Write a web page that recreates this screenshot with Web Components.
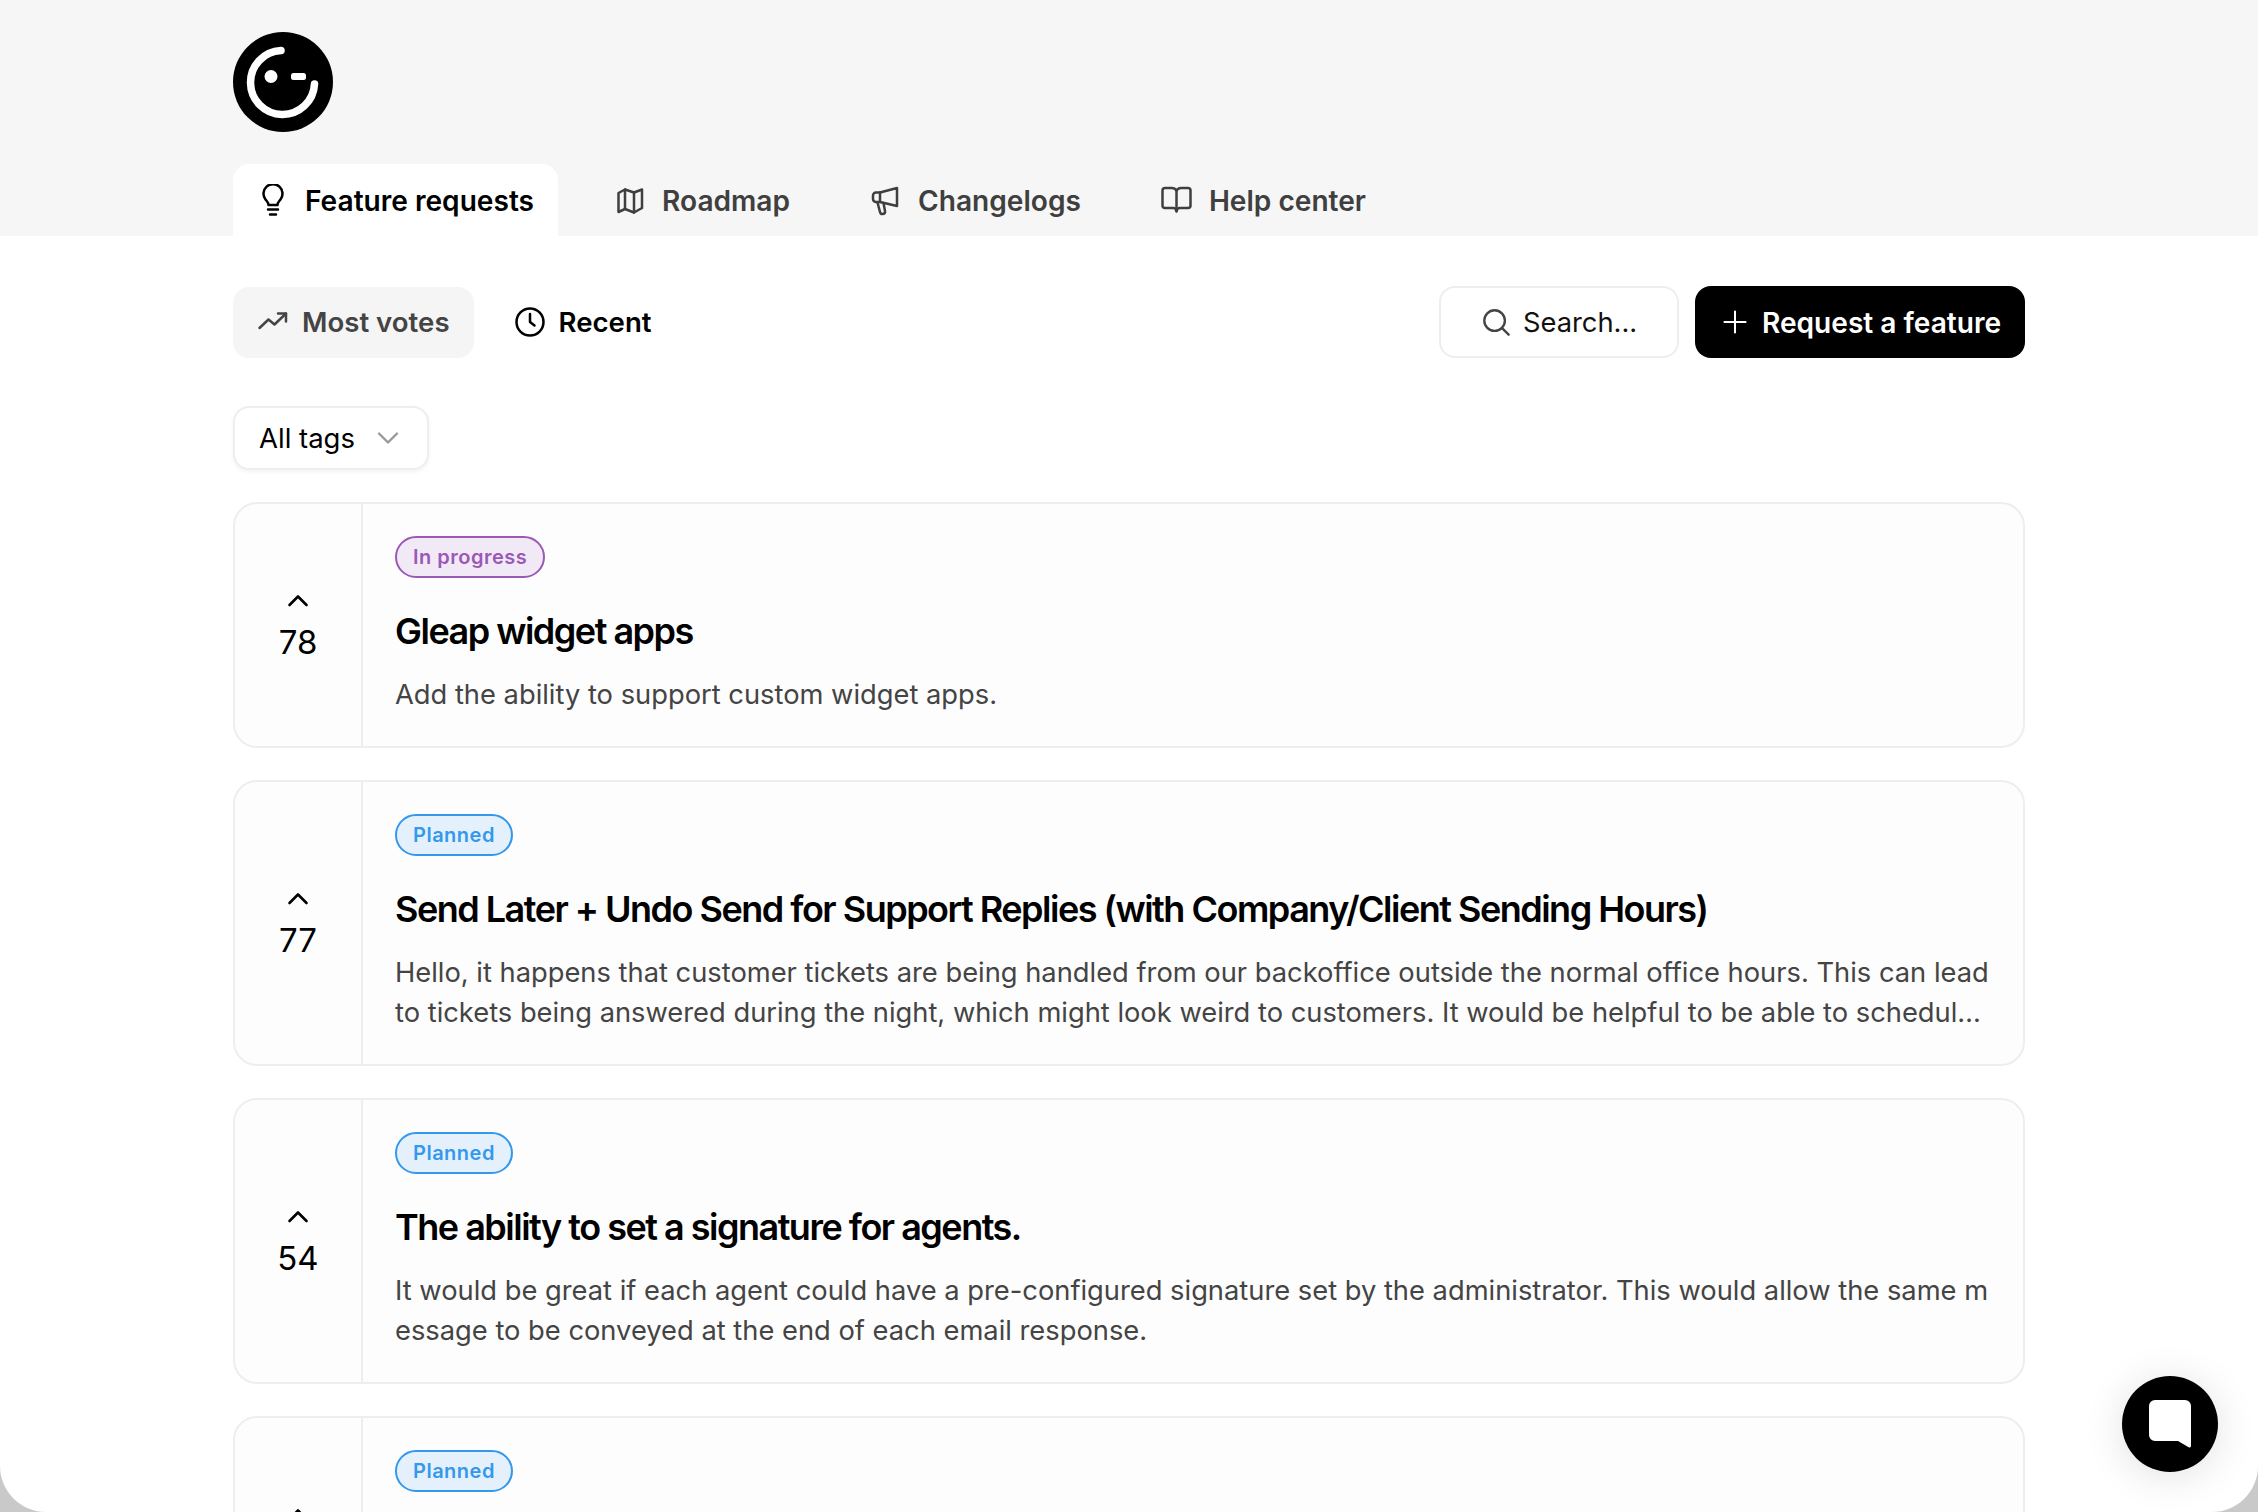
<!doctype html>
<html lang="en">
<head>
<meta charset="utf-8">
<title>Feature requests</title>
<style>
  html, body { margin: 0; height: 100%; overflow: hidden; background: #c9c9c9; }
  body { font-family: Inter, "Liberation Sans", sans-serif; }
</style>
</head>
<body>
<board-page>
  <top-header slot="header">
    <nav-tab active label="Feature requests" icon="bulb"></nav-tab>
    <nav-tab label="Roadmap" icon="map"></nav-tab>
    <nav-tab label="Changelogs" icon="megaphone"></nav-tab>
    <nav-tab label="Help center" icon="book"></nav-tab>
  </top-header>
  <filter-bar>
    <sort-button slot="left" selected label="Most votes" icon="trend"></sort-button>
    <sort-button slot="left" label="Recent" icon="clock"></sort-button>
    <search-box slot="right"></search-box>
    <request-button slot="right"></request-button>
  </filter-bar>
  <tag-select></tag-select>
  <request-card votes="78" status="progress" heading="Gleap widget apps">Add the ability to support custom widget apps.</request-card>
  <request-card votes="77" status="planned" heading="Send Later + Undo Send for Support Replies (with Company/Client Sending Hours)">Hello, it happens that customer tickets are being handled from our backoffice outside the normal office hours. This can lead to tickets being answered during the night, which might look weird to customers. It would be helpful to be able to schedule replies so they go out during the configured office hours of the company or client.</request-card>
  <request-card votes="54" status="planned" heading="The ability to set a signature for agents.">It would be great if each agent could have a pre-configured signature set by the administrator. This would allow the same message to be conveyed at the end of each email response.</request-card>
  <!-- only the top of this card is in the picture -->
  <request-card status="planned" style="min-height: 242px"></request-card>
  <chat-launcher></chat-launcher>
</board-page>

<script>
const ICONS = {
  bulb: '<path d="M11.500 21c0-2.500-1.500-3.500-3-5.500a9.500 9.500 0 1 1 15 0c-1.500 2-3 3-3 5.500z"/><path d="M11 25.500h10M13 30.500h6"/>',
  map: '<path d="M4.500 9 11 5.500l9 3 8-3V24l-8 4.500-9-3.500-6.500 3z"/><path d="M11 5.500V25M20 8.500v20"/>',
  megaphone: '<path d="M27 4 10 8.500H6a3 3 0 0 0-3 3V15a3 3 0 0 0 3 3h4l17 4z"/><path d="M10 8.500V18M7.500 18.500l2.500 9.500a2.500 2.500 0 0 0 5-1l-1.500-8"/>',
  book: '<path d="M15.500 6.500C14.500 5 13 4 11 4H4a2.500 2.500 0 0 0-2.500 2.500v15A2.500 2.500 0 0 0 4 24h8.500c1.500 0 2.500 1 3 3.500.5-2.500 1.500-3.500 3-3.500H27a2.500 2.500 0 0 0 2.500-2.500v-15A2.500 2.500 0 0 0 27 4h-7c-2 0-3.500 1-4.500 2.500z"/><path d="M15.500 6.500V27"/>',
  trend: '<path d="M2.500 22 11.500 13.500l6 5L29 7.500"/><path d="M21 7.500h8v8"/>',
  clock: '<circle cx="16" cy="16" r="13.500"/><path d="M16 8v8l4.500 3.500"/>',
  search: '<circle cx="14.500" cy="14.500" r="11"/><path d="m22.500 22.500 7 7"/>',
  plus: '<path d="M16 3v26M3 16h26"/>'
};

function icon(name, size) {
  return `<svg width="${size}" height="${size}" viewBox="0 0 32 32" fill="none" stroke="currentColor" stroke-width="2.500" stroke-linecap="round" stroke-linejoin="round" aria-hidden="true">${ICONS[name]}</svg>`;
}

class BoardPage extends HTMLElement {
  constructor() {
    super();
    this.attachShadow({ mode: 'open' }).innerHTML = `
      <style>
        :host {
          display: block;
          height: 100vh;
          overflow: hidden;
          background: #fff;
          border-radius: 0 0 46px 46px;
        }
        main {
          width: 1792px;
          margin: 0 auto;
          padding: 50px 0 0;
          display: flex;
          flex-direction: column;
          align-items: stretch;
          gap: 32px;
        }
      </style>
      <slot name="header"></slot>
      <main><slot></slot></main>
    `;
  }
}

class TopHeader extends HTMLElement {
  constructor() {
    super();
    this.attachShadow({ mode: 'open' }).innerHTML = `
      <style>
        :host { display: block; background: #f6f6f6; height: 236px; box-sizing: border-box; padding: 32px 0 0 233px; }
        svg { display: block; width: 100px; height: 100px; }
        nav { display: flex; gap: 32px; margin-top: 32px; }
      </style>
      <svg viewBox="0 0 100 100" aria-label="Logo">
        <circle cx="50" cy="50" r="50" fill="#000"/>
        <path d="M48 18.500A32 32 0 1 0 81.500 52" fill="none" stroke="#fff" stroke-width="7.500" stroke-linecap="round"/>
        <circle cx="38" cy="44.500" r="6.500" fill="#fff"/>
        <rect x="58" y="41" width="15" height="7" rx="2.500" fill="#fff"/>
      </svg>
      <nav><slot></slot></nav>
    `;
  }
}

class NavTab extends HTMLElement {
  constructor() {
    super();
    this.attachShadow({ mode: 'open' }).innerHTML = `
      <style>
        :host {
          display: flex; align-items: center; gap: 16px;
          height: 72px; box-sizing: border-box; padding: 0 24px;
          font: 600 28.100px/1 Inter, sans-serif; color: #3f3f3f;
          border-radius: 16px 16px 0 0;
        }
        :host([active]) { background: #fff; color: #000; }
        svg { display: block; flex: none; }
        span { padding-top: 2px; }
      </style>
      ${icon(this.getAttribute('icon'), 32)}
      <span>${this.getAttribute('label')}</span>
    `;
  }
}

class FilterBar extends HTMLElement {
  constructor() {
    super();
    this.attachShadow({ mode: 'open' }).innerHTML = `
      <style>
        :host { display: flex; justify-content: space-between; align-items: center; margin-bottom: 16px; }
        div { display: flex; align-items: center; gap: 16px; }
      </style>
      <div><slot name="left"></slot></div>
      <div><slot name="right"></slot></div>
    `;
  }
}

class SortButton extends HTMLElement {
  constructor() {
    super();
    this.attachShadow({ mode: 'open' }).innerHTML = `
      <style>
        :host {
          display: flex; align-items: center; gap: 13px;
          height: 71px; box-sizing: border-box; padding: 0 24px;
          font: 600 27.600px/1 Inter, sans-serif; color: #000;
          border-radius: 16px;
        }
        :host([selected]) { background: #f5f5f5; color: #444; }
        svg { display: block; flex: none; }
        span { padding-top: 2px; }
      </style>
      ${icon(this.getAttribute('icon'), 32)}
      <span>${this.getAttribute('label')}</span>
    `;
  }
}

class SearchBox extends HTMLElement {
  constructor() {
    super();
    this.attachShadow({ mode: 'open' }).innerHTML = `
      <style>
        :host {
          display: flex; align-items: center; gap: 12px;
          width: 240px; height: 72px; box-sizing: border-box; padding: 0 0 0 40px;
          background: #fff; border: 2px solid #eeeeee; border-radius: 16px;
          font: 400 27.300px/1 Inter, sans-serif; color: #111;
        }
        svg { display: block; color: #444; flex: none; }
        span { padding-top: 2px; }
      </style>
      ${icon('search', 30)}
      <span>Search...</span>
    `;
  }
}

class RequestButton extends HTMLElement {
  constructor() {
    super();
    this.attachShadow({ mode: 'open' }).innerHTML = `
      <style>
        :host {
          display: flex; align-items: center; gap: 14px;
          width: 330px; height: 72px; box-sizing: border-box; padding-left: 27px;
          background: #000; color: #fff; border-radius: 16px;
          font: 600 28.100px/1 Inter, sans-serif;
        }
        svg { display: block; flex: none; }
        span { padding-top: 2px; }
      </style>
      ${icon('plus', 26)}
      <span>Request a feature</span>
    `;
  }
}

class TagSelect extends HTMLElement {
  constructor() {
    super();
    this.attachShadow({ mode: 'open' }).innerHTML = `
      <style>
        :host {
          display: flex; align-items: center; gap: 22px; align-self: flex-start;
          width: 196px; height: 64px; box-sizing: border-box; padding: 0 0 0 24px;
          background: #fff; border: 2px solid #eeeeee; border-radius: 16px;
          box-shadow: 0 2px 4px rgba(0,0,0,.05);
          font: 400 27.500px/1 Inter, sans-serif; color: #000;
        }
        svg { display: block; flex: none; }
        span { padding-top: 1px; }
      </style>
      <span>All tags</span>
      <svg width="22" height="14" viewBox="0 0 22 14" fill="none" stroke="#999" stroke-width="2.400" stroke-linecap="round" stroke-linejoin="round"><path d="m2 2.500 9 9 9-9"/></svg>
    `;
  }
}

class RequestCard extends HTMLElement {
  constructor() {
    super();
    const status = this.getAttribute('status') === 'progress'
      ? { cls: 'progress', text: 'In progress' }
      : { cls: 'planned', text: 'Planned' };
    this.attachShadow({ mode: 'open' }).innerHTML = `
      <style>
        :host {
          display: flex; flex: none;
          background: #fdfdfd; border: 2px solid #eeeeee; border-radius: 24px;
          color: #000;
        }
        .votes {
          flex: none; width: 128px; box-sizing: border-box; padding-top: 3px;
          display: flex; flex-direction: column; align-items: center; justify-content: center; gap: 18px;
          border-right: 2px solid #eeeeee;
          font: 400 33px/1 Inter, sans-serif;
        }
        .votes svg { display: block; }
        .body { flex: 1; min-width: 0; padding: 32px 32px 31px 32px; }
        .badge {
          display: inline-flex; align-items: center; height: 42px; box-sizing: border-box;
          padding: 0 16px; border-radius: 21px; border-width: 2px; border-style: solid;
          font: 600 20px/1 Inter, sans-serif; letter-spacing: .5px;
          vertical-align: top;
        }
        .progress { color: #9b59b6; border-color: #9b59b6; background: #f2e9f7; }
        .planned { color: #3498ec; border-color: #3498ec; background: #e4f1fd; }
        h2 {
          margin: 0; padding: 30px 0 20px;
          font: 600 36px/46.800px Inter, sans-serif; letter-spacing: -1.500px; color: #000;
        }
        p {
          margin: 0; font: 400 27.300px/40.200px Inter, sans-serif; color: #444;
          word-break: break-all;
          display: -webkit-box; -webkit-box-orient: vertical; -webkit-line-clamp: 2; overflow: hidden;
        }
      </style>
      <div class="votes">
        <svg width="22" height="14" viewBox="0 0 22 14" fill="none" stroke="#000" stroke-width="2.600" stroke-linecap="round" stroke-linejoin="round"><path d="m2.500 11 8.500-8.500 8.500 8.500"/></svg>
        <span>${this.getAttribute('votes') || '&nbsp;'}</span>
      </div>
      <div class="body">
        <span class="badge ${status.cls}">${status.text}</span>
        <h2>${this.getAttribute('heading') || ''}</h2>
        <p><slot></slot></p>
      </div>
    `;
  }
}

class ChatLauncher extends HTMLElement {
  constructor() {
    super();
    this.attachShadow({ mode: 'open' }).innerHTML = `
      <style>
        :host {
          position: fixed; left: 2122px; top: 1376px;
          width: 96px; height: 96px; border-radius: 50%;
          background: #000; box-shadow: 0 4px 40px rgba(0,0,0,.12);
          display: flex; align-items: center; justify-content: center;
        }
        svg { display: block; }
      </style>
      <svg width="42" height="48" viewBox="0 0 42 48" aria-hidden="true"><path fill="#fff" d="M6 0h30a6 6 0 0 1 6 6v40a1.500 1.500 0 0 1-2.300 1.300L29 41H6a6 6 0 0 1-6-6V6a6 6 0 0 1 6-6z"/></svg>
    `;
  }
}

customElements.define('board-page', BoardPage);
customElements.define('top-header', TopHeader);
customElements.define('nav-tab', NavTab);
customElements.define('filter-bar', FilterBar);
customElements.define('sort-button', SortButton);
customElements.define('search-box', SearchBox);
customElements.define('request-button', RequestButton);
customElements.define('tag-select', TagSelect);
customElements.define('request-card', RequestCard);
customElements.define('chat-launcher', ChatLauncher);
</script>
</body>
</html>
